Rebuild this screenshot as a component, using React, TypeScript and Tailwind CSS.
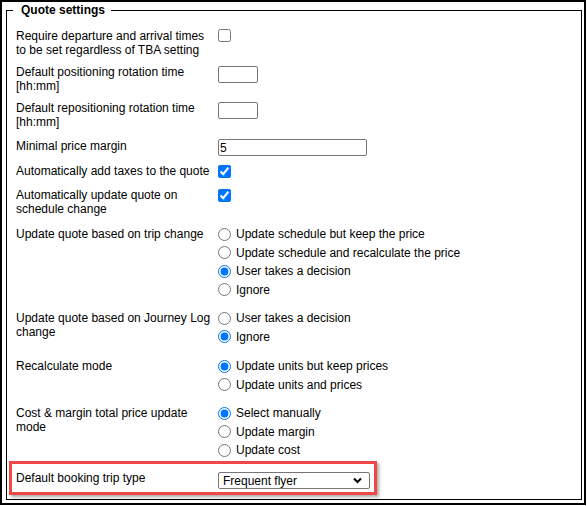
import React from "react";

function Radio({ label, checked }: { label: string; checked?: boolean }) {
  return (
    <label className="flex items-center h-[18.5px] gap-[5px]">
      <input type="radio" defaultChecked={checked} className="m-0 w-[13px] h-[13px]" />
      <span>{label}</span>
    </label>
  );
}

function Row({
  label,
  children,
  className = "",
  labelClass = "",
}: {
  label: React.ReactNode;
  children?: React.ReactNode;
  className?: string;
  labelClass?: string;
}) {
  return (
    <div className={"flex pl-[9px] " + className}>
      <div className={"w-[202px] pr-[2px] shrink-0 " + labelClass}>{label}</div>
      <div className="flex flex-col">{children}</div>
    </div>
  );
}

export default function App() {
  return (
    <div
      className="w-[586px] h-[505px] border-2 border-black bg-white text-black text-[12px] leading-[14px]"
      style={{ fontFamily: '"Liberation Sans", Arial, sans-serif' }}
    >
      <fieldset className="mt-[1px] ml-[4px] w-[576px] h-[497px] border border-black pt-[12px]">
        <legend className="ml-[6px] pl-[8px] pr-[6px] font-bold leading-[14px]">Quote settings</legend>

        <Row label="Require departure and arrival times to be set regardless of TBA setting">
          <input type="checkbox" className="m-0 w-[13px] h-[13px]" />
        </Row>

        <Row className="mt-[8px]" label="Default positioning rotation time [hh:mm]">
          <input type="text" className="mt-[1px] w-[40px] h-[17px] border border-[#767676] rounded-[2px] px-[2px]" />
        </Row>

        <Row className="mt-[8px]" label="Default repositioning rotation time [hh:mm]">
          <input type="text" className="mt-[1px] w-[40px] h-[17px] border border-[#767676] rounded-[2px] px-[2px]" />
        </Row>

        <Row className="mt-[10px]" label="Minimal price margin">
          <input
            type="text"
            defaultValue="5"
            className="w-[149px] h-[17px] border border-[#767676] rounded-[2px] px-[1px]"
          />
        </Row>

        <Row className="mt-[8px]" label="Automatically add taxes to the quote">
          <input type="checkbox" defaultChecked className="mt-[1px] m-0 w-[13px] h-[13px]" />
        </Row>

        <Row className="mt-[10px]" label="Automatically update quote on schedule change">
          <input type="checkbox" defaultChecked className="mt-[1px] m-0 w-[13px] h-[13px]" />
        </Row>

        <Row className="mt-[9px]" labelClass="pt-[2px]" label="Update quote based on trip change">
          <Radio label="Update schedule but keep the price" />
          <Radio label="Update schedule and recalculate the price" />
          <Radio label="User takes a decision" checked />
          <Radio label="Ignore" />
        </Row>

        <Row className="mt-[10px]" labelClass="pt-[2px]" label="Update quote based on Journey Log change">
          <Radio label="User takes a decision" />
          <Radio label="Ignore" checked />
        </Row>

        <Row className="mt-[11px]" labelClass="pt-[2px]" label="Recalculate mode">
          <Radio label="Update units but keep prices" checked />
          <Radio label="Update units and prices" />
        </Row>

        <Row className="mt-[10px]" labelClass="pt-[2px]" label="Cost & margin total price update mode">
          <Radio label="Select manually" checked />
          <Radio label="Update margin" />
          <Radio label="Update cost" />
        </Row>

        <div className="mt-[1.5px] ml-[2px] w-[368px] border-[3px] border-[#f04848] shadow-[2px_2px_3px_rgba(0,0,0,0.35)] flex pl-[4px] pt-[7px] pb-[3px]">
          <div className="w-[202px] shrink-0">Default booking trip type</div>
          <div className="relative mt-[1px] w-[152px] h-[17px]">
            <select className="appearance-none w-full h-full border border-[#767676] rounded-[2px] pl-[4px] bg-white">
              <option>Frequent flyer</option>
            </select>
            <svg
              className="absolute right-[8px] top-[5px] pointer-events-none"
              width="9"
              height="7"
              viewBox="0 0 9 7"
            >
              <path d="M1 1.5 L4.5 5 L8 1.5" stroke="black" strokeWidth="2" fill="none" />
            </svg>
          </div>
        </div>
      </fieldset>
    </div>
  );
}
